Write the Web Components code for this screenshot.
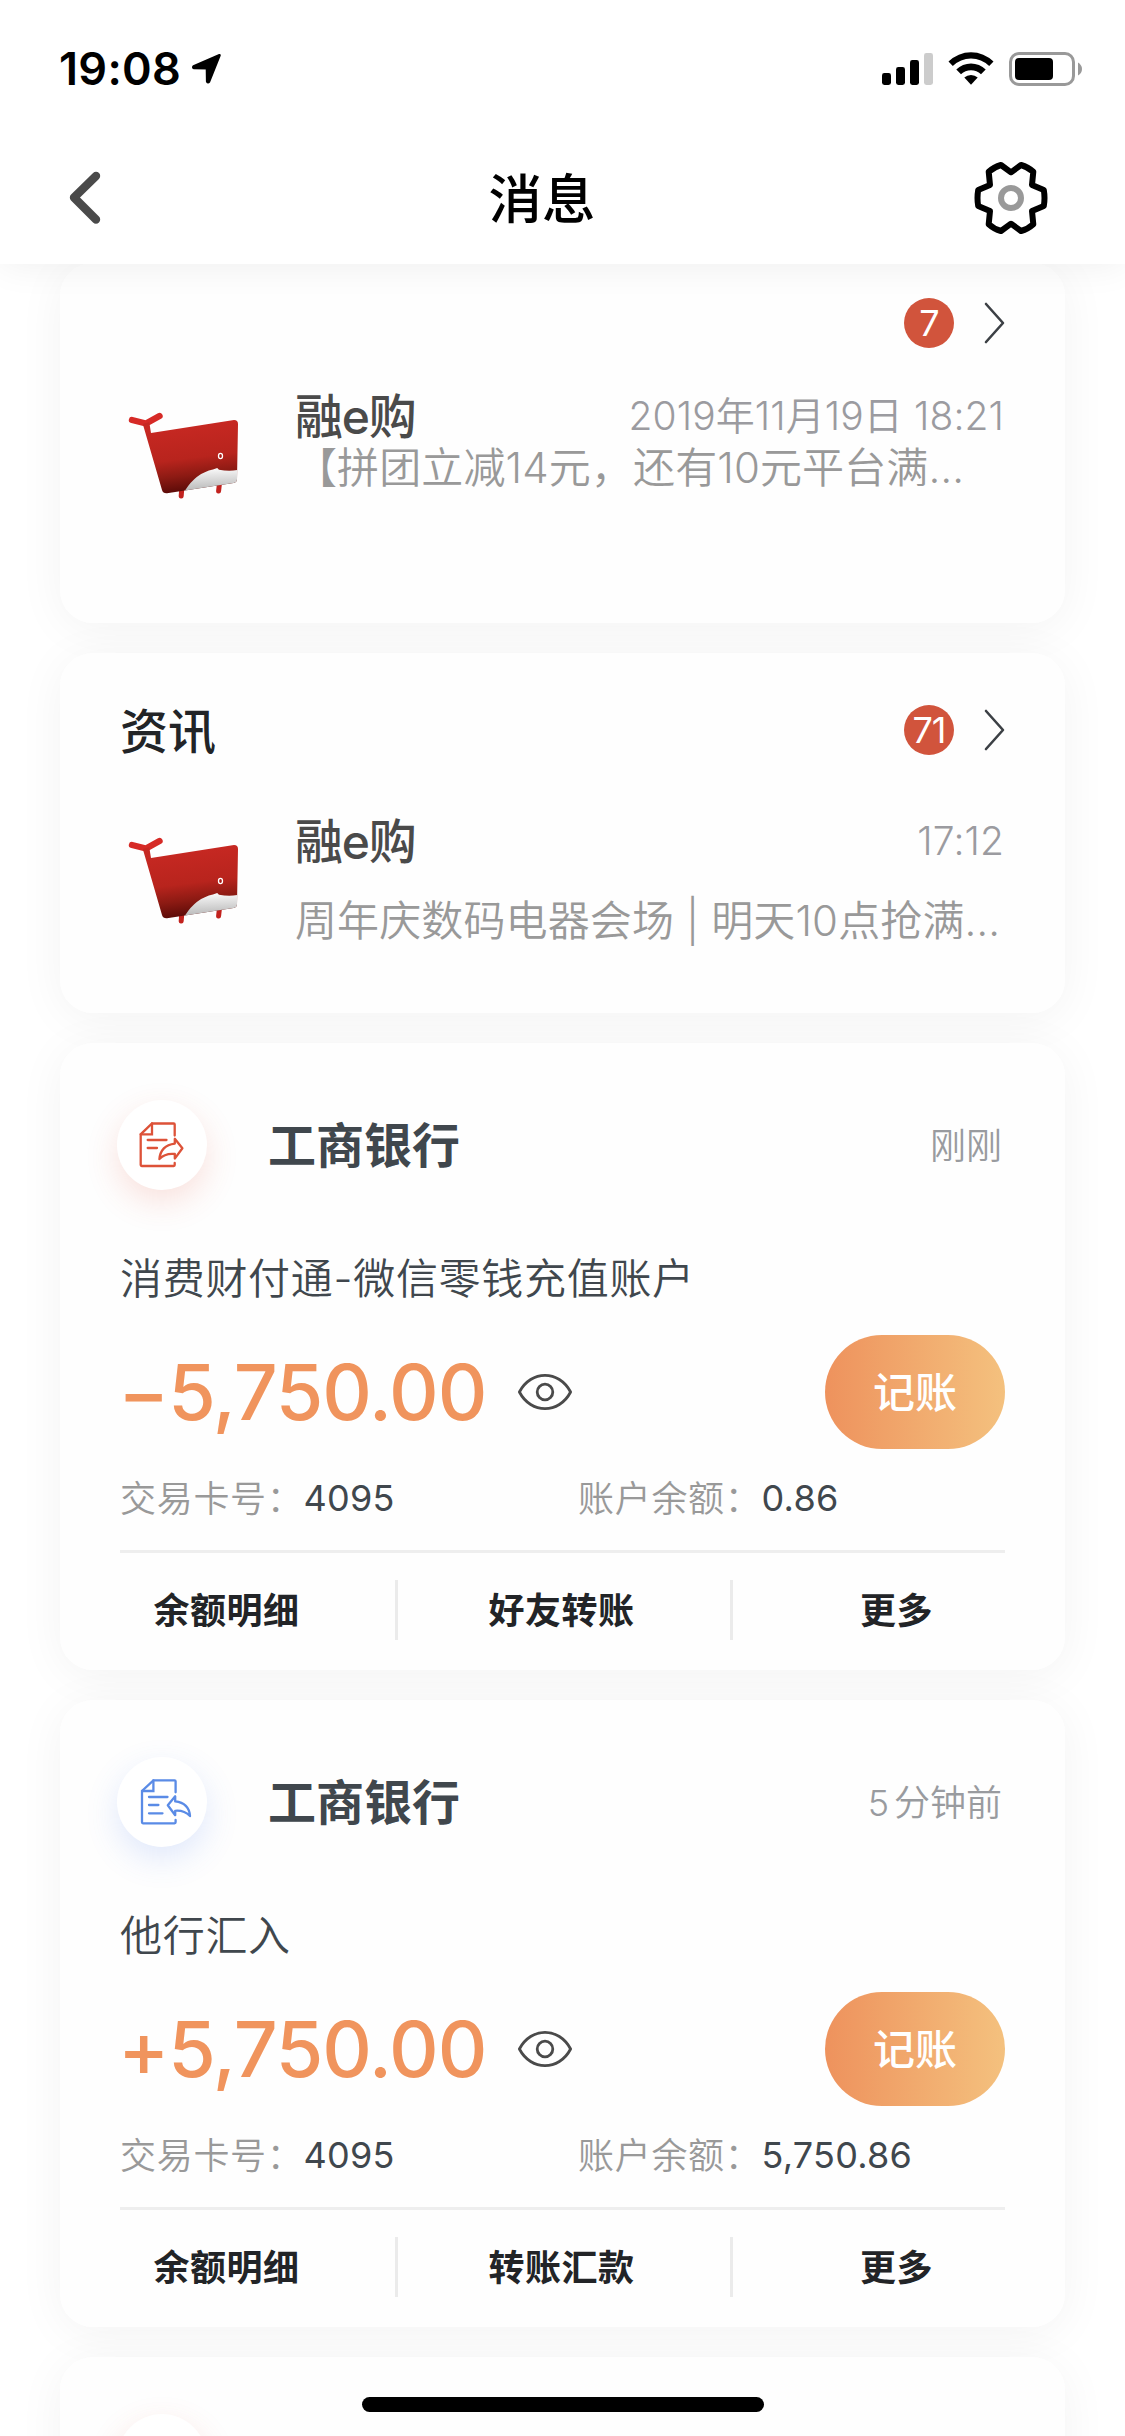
<!DOCTYPE html>
<html lang="zh-CN">
<head>
<meta charset="utf-8">
<title>消息</title>
<style>
  html, body { margin: 0; padding: 0; }
  body {
    width: 1125px; height: 2436px; overflow: hidden; background: #fff;
    font-family: Inter, "Noto Sans CJK SC", sans-serif;
    -webkit-font-smoothing: antialiased;
  }
</style>
</head>
<body>
<message-screen>
  <status-bar slot="status" time="19:08"></status-bar>
  <nav-bar slot="nav">消息</nav-bar>
  <feed-card count="7" class="compact">
    <span slot="name">融e购</span>
    <span slot="time">2019年11月19日 18:21</span>
    <span slot="text">【拼团立减14元，还有10元平台满…</span>
  </feed-card>
  <feed-card count="71">
    <span slot="title">资讯</span>
    <span slot="name">融e购</span>
    <span slot="time">17:12</span>
    <span slot="text">周年庆数码电器会场 | 明天10点抢满…</span>
  </feed-card>
  <bill-card kind="out" card="4095" balance="0.86" second="好友转账">
    <span slot="bank">工商银行</span>
    <span slot="when">刚刚</span>
    <span slot="desc">消费财付通-微信零钱充值账户</span>
    <span slot="amount">−5,750.00</span>
  </bill-card>
  <bill-card kind="in" card="4095" balance="5,750.86" second="转账汇款">
    <span slot="bank">工商银行</span>
    <span slot="when"><span style="letter-spacing:5px">5</span>分钟前</span>
    <span slot="desc">他行汇入</span>
    <span slot="amount">+5,750.00</span>
  </bill-card>
  <bill-card kind="next"></bill-card>
  <home-indicator slot="home"></home-indicator>
</message-screen>

<script>
const define = (name, render) => customElements.define(name, class extends HTMLElement {
  connectedCallback() {
    if (this.shadowRoot) return;
    this.attachShadow({ mode: 'open' }).innerHTML = render(this);
  }
});

const cardStyle = `
  *, *::before { box-sizing: border-box; }
  :host { display: flex; flex-direction: column; position: relative; box-sizing: border-box;
    flex: none; border-radius: 33px; background: #fefefe; }
  :host::before { content: ""; position: absolute; inset: 0; z-index: -1; border-radius: 33px;
    box-shadow: 0 6px 48px rgba(0,0,0,.05); }
`;

define('message-screen', () => `
  <style>
    :host { display: flex; flex-direction: column; width: 1125px; height: 2436px; overflow: hidden; position: relative; }
    header { flex: none; height: 264px; background: #fff; box-shadow: 0 0 36px rgba(0,0,0,.07); position: relative; z-index: 2; }
    main { flex: 1; min-height: 0; display: flex; flex-direction: column; gap: 30px; padding: 0 60px; margin-top: -1px; isolation: isolate; }
  </style>
  <header><slot name="status"></slot><slot name="nav"></slot></header>
  <main><slot></slot></main>
  <slot name="home"></slot>
`);

define('status-bar', el => `
  <style>
    :host { display: flex; height: 132px; padding: 6px 42px 0 59px; box-sizing: border-box; align-items: center; justify-content: space-between; }
    .left { display: flex; align-items: center; gap: 9px; }
    b { font-weight: 600; font-size: 45px; line-height: 60px; color: #000; letter-spacing: .3px; }
    svg { display: block; }
  </style>
  <div class="left"><b>${el.getAttribute('time')}</b>
    <svg width="32" height="34" viewBox="190 52 32 34"><path d="M219.5 55.3 L193.6 66.4 Q192.8 67.6 194 67.9 L207 68.3 L207.2 81.6 Q208 82.8 209 81.6 Z" fill="#000" stroke="#000" stroke-width="2.6" stroke-linejoin="round"/></svg>
  </div>
  <svg width="202" height="38" viewBox="881 50 202 38">
    <rect x="882" y="73" width="9" height="12" rx="2.4"/>
    <rect x="896" y="67" width="9" height="18" rx="2.4"/>
    <rect x="910" y="60" width="9" height="25" rx="2.4"/>
    <rect x="924" y="53" width="9" height="32" rx="2.4" fill="#ccc"/>
    <path d="M948.5 61.5 A32 32 0 0 1 993.5 61.5 L989.2 66 A26 26 0 0 0 952.8 66 Z"/>
    <path d="M956.3 69.5 A21 21 0 0 1 985.7 69.5 L981 74.2 A14.4 14.4 0 0 0 961 74.2 Z"/>
    <path d="M964.3 77.6 A9.6 9.6 0 0 1 977.7 77.6 L971 84.8 Z"/>
    <rect x="1010.5" y="53.5" width="63" height="31" rx="8.5" fill="none" stroke="#999" stroke-width="3"/>
    <rect x="1015" y="58" width="38" height="22" rx="4"/>
    <path d="M1078 62.5 Q1082 65 1082 69 Q1082 73 1078 75.5 Z" fill="#999"/>
  </svg>
`);

define('nav-bar', () => `
  <style>
    :host { display: flex; height: 132px; padding: 0 76px 0 65px; box-sizing: border-box; align-items: center; justify-content: space-between; }
    h1 { margin: 0 0 0 6px; padding-top: 4px; font-weight: 500; font-size: 53.5px; line-height: 60px; color: #000; }
    svg { display: block; }
  </style>
  <svg width="40" height="56" viewBox="66 170 40 56"><path d="M97 176 L75 197.5 L97 219.5" fill="none" stroke="#4a4a4a" stroke-width="8.4" stroke-linecap="round" stroke-linejoin="round"/></svg>
  <h1><slot></slot></h1>
  <svg width="76" height="76" viewBox="-38 -38 76 76" fill="none" stroke-width="6">
    <path stroke="#000" stroke-linejoin="round" d="M0 -25.7 L10 -33 Q17 -31 22.3 -26.2 L21 -13 L32.8 -8 Q34.2 0 32.8 8 L21 13 L22.3 26.2 Q17 31 10 33 L0 25.7 L-10 33 Q-17 31 -22.3 26.2 L-21 13 L-32.8 8 Q-34.2 0 -32.8 -8 L-21 -13 L-22.3 -26.2 Q-17 -31 -10 -33 Z"/>
    <circle r="10" stroke="#999"/>
  </svg>
`);

let cartId = 0;
define('whale-cart', () => {
  const n = ++cartId;
  return `
  <style>:host { display: block; } svg { display: block; }</style>
  <svg width="125" height="105" viewBox="120 405 125 105">
    <defs>
      <linearGradient id="r${n}" gradientUnits="userSpaceOnUse" x1="195" y1="425" x2="203" y2="489"><stop offset="0" stop-color="#c62822"/><stop offset=".5" stop-color="#b8241d"/><stop offset=".76" stop-color="#8c1a13"/><stop offset="1" stop-color="#5c0b08"/></linearGradient>
      <linearGradient id="w${n}" x1="0" y1="0" x2=".1" y2="1"><stop offset="0" stop-color="#fff"/><stop offset=".35" stop-color="#e6e6e6"/><stop offset="1" stop-color="#bbb"/></linearGradient>
    </defs>
    <path d="M181.8 488 L181.2 496 M219.4 484 L218.6 491" stroke="#c2221e" stroke-width="5" stroke-linecap="round"/>
    <path d="M132 420 L146 423.5 L159.5 416" fill="none" stroke="#d62a26" stroke-width="6.4" stroke-linecap="round" stroke-linejoin="round"/>
    <path d="M142.8 424 L149.2 422 L151 433 L234 420 Q238 420 238 424 L237 479 Q237 482.5 233.5 483 L167 493.2 Q163 493.5 162 490 Z" fill="url(#r${n})"/>
    <path d="M185 490.5 Q196 473 213 469.5 L217.2 468 L219 469.8 Q229 471.5 237.3 470 L237 479 Q237 482.5 233.5 483 Z" fill="url(#w${n})"/>
    <ellipse cx="220.5" cy="456" rx="2" ry="2.6" fill="#a81c18" stroke="#fff" stroke-width="1.3"/>
  </svg>`;
});

define('feed-card', el => `
  <style>
    ${cardStyle}
    :host { height: 360px; padding: 52px 60px 0; }
    :host(.compact) { padding-top: 35px; }
    .head { display: flex; align-items: center; height: 50px; }
    h2 { margin: 0; padding-top: 4px; flex: 1; font-size: 48px; font-weight: 500; line-height: 50px; color: #222427; }
    .badge { width: 50px; height: 50px; border-radius: 50%; background: #d1543c; color: #fff; font-size: 36px; line-height: 50px; text-align: center; letter-spacing: -1px; }
    .chev { margin-left: 29px; display: block; }
    .body { display: flex; margin-top: 62px; }
    :host(.compact) .body { margin-top: 44px; }
    whale-cart { margin-top: 13px; flex: none; }
    .col { flex: 1; min-width: 0; margin-left: 50px; display: flex; flex-direction: column; gap: 35px; }
    :host(.compact) .col { gap: 7px; }
    .row { display: flex; justify-content: space-between; align-items: center; height: 48px; }
    .name { padding-top: 1px; font-size: 48px; font-weight: 500; line-height: 48px; color: #4a4a4a; letter-spacing: -1.2px; }
    .time { font-size: 39px; font-weight: 350; line-height: 48px; color: #9b9ba0; letter-spacing: .1px; margin-right: 1px; }
    .text { font-size: 42px; font-weight: 350; line-height: 42px; color: #999; white-space: nowrap; letter-spacing: .12px; }
  </style>
  <div class="head">
    <h2><slot name="title"></slot></h2>
    <div class="badge">${el.getAttribute('count')}</div>
    <svg class="chev" width="22" height="44" viewBox="0 0 22 44"><path d="M3 3 L20 22 L3 41" fill="none" stroke="#3c4045" stroke-width="2.6" stroke-linecap="round" stroke-linejoin="round"/></svg>
  </div>
  <div class="body">
    <whale-cart></whale-cart>
    <div class="col">
      <div class="row"><div class="name"><slot name="name"></slot></div><div class="time"><slot name="time"></slot></div></div>
      <div class="text"><slot name="text"></slot></div>
    </div>
  </div>
`);

const receipts = {
  out: `<g stroke="#dd5238"><path d="M57.7 35.5 V24.5 Q57.7 23.5 56.7 23.5 H35 L23.7 34.3 V65 Q23.7 66 24.7 66 H56.7 Q57.7 66 57.7 65 V63"/><path d="M35 23.5 V34.3 H23.7 M30.7 40 H49.5 M30.7 48 H40"/>
    <path d="M65.4 48.3 L57.8 38.8 V43.6 Q43.6 45.5 42.4 59 Q48 53 57.8 54 V58.6 Z" stroke-linejoin="round"/></g>`,
  in: `<g stroke="#5a8be6"><path d="M58.6 35.3 V24.3 Q58.6 23.3 57.6 23.3 H36.4 L25 34 V65.3 Q25 66.3 26 66.3 H57.6 Q58.6 66.3 58.6 65.3 V63"/><path d="M36.4 23.3 V34 H25 M32 40 H50.5 M32 48 H41.4 M32 56.3 H45.5"/>
    <path d="M50.8 48.3 L58.2 39.3 V44.4 Q72 46 73 59 Q67 53 58.2 53.8 V58.2 Z" stroke-linejoin="round"/></g>`,
  next: ''
};

define('bill-card', el => {
  const kind = el.getAttribute('kind');
  const a = n => el.getAttribute(n);
  const glow = kind === 'in' ? 'rgba(80,125,235,.17)' : 'rgba(225,85,60,.17)';
  const body = kind === 'next' ? '' : `
    <div class="desc"><slot name="desc"></slot></div>
    <div class="money">
      <div class="amount"><slot name="amount"></slot></div>
      <svg class="eye" width="56" height="40" viewBox="-28 -20 56 40" fill="none" stroke="#4a4a4a" stroke-width="2.8"><path d="M-25.6 0 C-14 -22.2 14 -22.2 25.6 0 C14 22.2 -14 22.2 -25.6 0 Z" stroke-linejoin="round"/><circle r="7.8"/></svg>
      <div class="btn">记账</div>
    </div>
    <div class="facts">
      <div><i>交易卡号：</i><span>${a('card')}</span></div>
      <div><i>账户余额：</i><span>${a('balance')}</span></div>
    </div>
    <hr>
    <div class="actions"><div>余额明细</div><div>${a('second')}</div><div>更多</div></div>`;
  return `
  <style>
    ${cardStyle}
    :host { height: 627px; padding-top: 57px; }
    .top { display: flex; align-items: center; height: 90px; padding: 0 63px 0 57px; }
    .disc { width: 90px; height: 90px; border-radius: 50%; background: #fff; box-shadow: 0 12px 32px ${glow}; }
    .disc svg { display: block; }
    .bank { margin-left: 61px; padding-top: 2px; flex: 1; font-size: 48px; font-weight: 600; line-height: 60px; color: #40474d; }
    .when { padding-top: 2px; font-size: 36px; font-weight: 350; line-height: 40px; color: #999b9f; }
    .desc { margin: 65px 60px 0; height: 48px; line-height: 48px; font-size: 42px; color: #40474d; letter-spacing: .7px; font-weight: 350; white-space: nowrap; }
    .money { display: flex; align-items: center; height: 114px; margin: 32px 60px 0; }
    .amount { font-size: 77px; font-weight: 500; line-height: 90px; color: #f0945d; letter-spacing: -1.1px; width: 399px; margin-left: -2px; white-space: nowrap; }
    .eye { display: block; }
    .btn { margin-left: auto; width: 180px; height: 114px; padding-top: 2px; border-radius: 57px; background: linear-gradient(90deg, #ee925d, #f4c17e); color: #fff; font-size: 42px; font-weight: 500; line-height: 112px; text-align: center; }
    .facts { display: flex; height: 40px; margin: 29px 60px 0; line-height: 40px; font-size: 36px; letter-spacing: .7px; }
    .facts div { width: 458px; flex: none; display: flex; }
    .facts i { padding-top: 1px; font-style: normal; font-weight: 350; color: #999; }
    .facts span { color: #40474d; letter-spacing: .25px; }
    hr { margin: 32px 60px 0; border: 0; height: 3px; background: #eee; flex: none; }
    .actions { display: grid; grid-template-columns: repeat(3, 335px); align-items: center; height: 114px; }
    .actions div { text-align: center; height: 60px; line-height: 62px; font-size: 36px; font-weight: 700; color: #222427; letter-spacing: .5px; padding-right: 2px; }
    .actions div + div { border-left: 3px solid #ebebeb; padding-right: 5px; }
  </style>
  <div class="top">
    <div class="disc"><svg width="90" height="90" viewBox="0 0 90 90" fill="none" stroke-width="2.3" stroke-linecap="round">${receipts[kind]}</svg></div>
    <div class="bank"><slot name="bank"></slot></div>
    <div class="when"><slot name="when"></slot></div>
  </div>${body}`;
});

define('home-indicator', () => `
  <style>:host { display: block; position: absolute; left: 362px; top: 2397px; width: 402px; height: 15px; border-radius: 8px; background: #000; z-index: 3; }</style>
`);
</script>
</body>
</html>
